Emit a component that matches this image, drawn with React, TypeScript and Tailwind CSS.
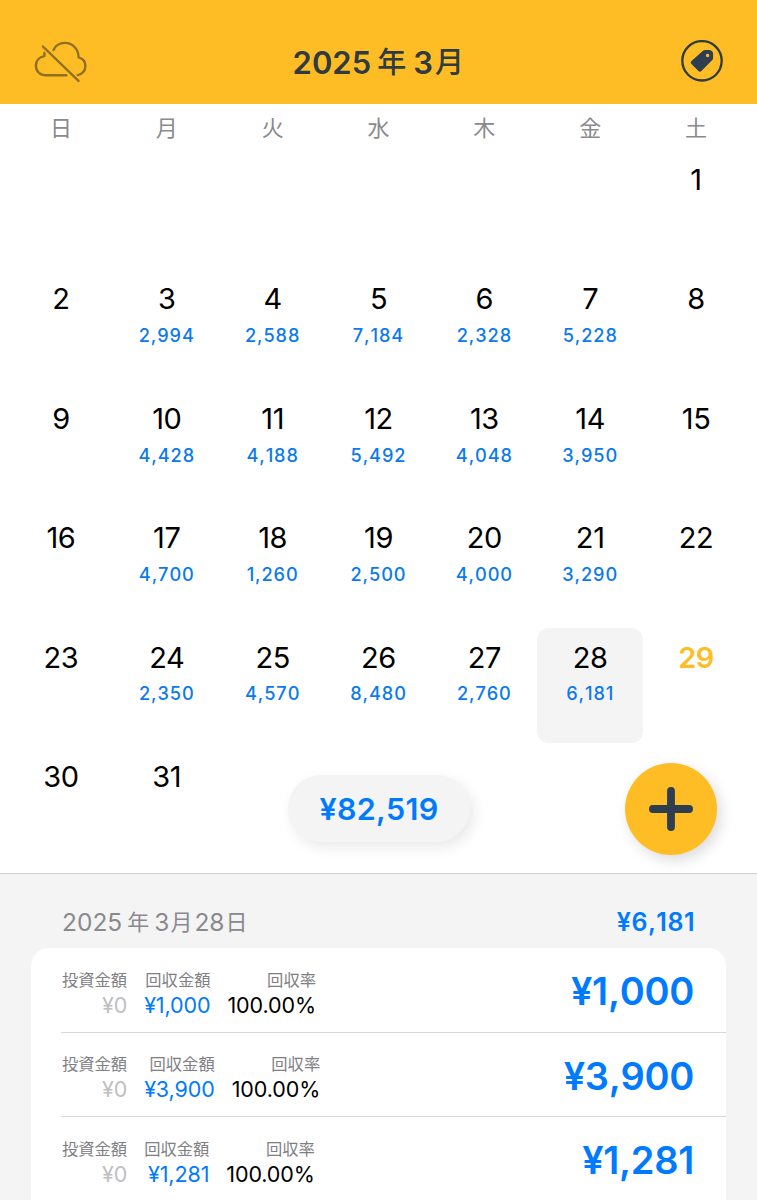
import { FC } from 'react';
import { clsx } from 'clsx';

type Day = { day: number; amount?: string };

const weekdays = ['日', '月', '火', '水', '木', '金', '土'];

const amounts: Record<number, string> = {
	3: '2,994',
	4: '2,588',
	5: '7,184',
	6: '2,328',
	7: '5,228',
	10: '4,428',
	11: '4,188',
	12: '5,492',
	13: '4,048',
	14: '3,950',
	17: '4,700',
	18: '1,260',
	19: '2,500',
	20: '4,000',
	21: '3,290',
	24: '2,350',
	25: '4,570',
	26: '8,480',
	27: '2,760',
	28: '6,181',
};

const days: Day[] = Array.from({ length: 31 }, (_, i) => ({ day: i + 1, amount: amounts[i + 1] }));

const records = ['¥1,000', '¥3,900', '¥1,281'];

const SELECTED = 28;
const TODAY = 29;

const CloudOffIcon: FC = () => (
	<svg width="54" height="44" viewBox="0.1 0.3 54 44" fill="none" stroke="#8f6f22" strokeWidth="2.4" strokeLinecap="round" strokeLinejoin="round">
		<path d="M10.5 13.3V16.4C5.5 17.2 2 21 2 26C2 31.3 6.1 35.6 11.5 35.6H32.5" />
		<path d="M19.6 10.2C21.8 5.6 26.2 3.2 31 3.2C38.6 3.2 44.6 9.3 44.7 17.7C48.7 18.8 51.5 22 51.5 26.2C51.5 31 48.2 34.8 43.8 35.4" />
		<path d="M9 6.8L44.6 41.2" />
	</svg>
);

const TagIcon: FC = () => (
	<svg width="42" height="42" viewBox="0 0.2 42 42">
		<circle cx="21" cy="21" r="19.7" fill="none" stroke="#2f3b40" strokeWidth="2.3" />
		<path
			fill="#2c3e50"
			fillRule="evenodd"
			d="M24.8 10.1H28.6C29.4 10.1 30 10.4 30.5 10.9L31.4 11.9C31.9 12.4 32.1 13 32.1 13.7V17.6C32.1 18.9 31.7 19.8 30.8 20.7L20.4 31.2C19.5 32.1 18.4 32.1 17.5 31.2L10.4 24.1C9.5 23.2 9.6 22.2 10.5 21.3L21.4 11.4C22.4 10.5 23.4 10.1 24.8 10.1ZM26.6 14A1.7 1.7 0 1 0 26.6 17.4A1.7 1.7 0 1 0 26.6 14Z"
		/>
	</svg>
);

const Header: FC = () => (
	<header className="flex h-[104px] items-start justify-between bg-[#ffbd25] pt-10 pr-[34.5px] pl-[34px]">
		<button type="button" aria-label="Sync off" className="w-[54px]">
			<CloudOffIcon />
		</button>
		<h1 className="flex h-11 items-center pt-px text-[31px] leading-none font-semibold text-[#2f3b40]">
			<span>2025</span>
			<span className="ml-[6px] text-[29px] font-medium">年</span>
			<span className="ml-[7px]">3</span>
			<span className="ml-[2px] text-[29px] font-medium">月</span>
		</h1>
		<button type="button" aria-label="Tags" className="flex w-[54px] justify-end">
			<TagIcon />
		</button>
	</header>
);

const DayCell: FC<Day> = ({ day, amount }) => (
	<div
		className={clsx(
			'mb-[4.4px] flex h-[115px] flex-col items-center rounded-xl pt-[10.3px]',
			day === 1 && 'col-start-7',
			day === SELECTED && 'bg-[#f4f4f4]',
		)}
	>
		<span className={clsx('text-[29px] leading-[37px] tracking-[-0.4px]', day === TODAY ? 'font-semibold text-[#ffbd25]' : 'text-black')}>{day}</span>
		{amount && <span className="mt-[6.7px] text-[18.2px] leading-[22px] font-medium tracking-[0.9px] text-[#0a7aee] [font-kerning:none]">{amount}</span>}
	</div>
);

const Calendar: FC = () => (
	<section className="relative h-[770px] border-b border-[#d0d0d2] bg-white px-2">
		<div className="grid h-[46.8px] grid-cols-7 text-center text-[22px] leading-[48px] text-[#8a8a8e]">
			{weekdays.map((w) => (
				<span key={w}>{w}</span>
			))}
		</div>
		<div className="grid grid-cols-7">
			{days.map((d) => (
				<DayCell key={d.day} {...d} />
			))}
		</div>
		<div className="absolute top-[671px] left-[288px] flex h-[67px] w-[182px] items-center justify-center rounded-full bg-[#f4f4f4] pt-px text-[30.5px] font-semibold tracking-[0.3px] text-[#007aff] shadow-[4px_5px_14px_rgba(0,0,0,0.09)] [font-kerning:none]">
			¥82,519
		</div>
		<button
			type="button"
			aria-label="Add record"
			className="absolute top-[659px] left-[625px] flex size-[92px] items-center justify-center rounded-full bg-[#ffbd25] shadow-[4px_5px_14px_rgba(0,0,0,0.14)]"
		>
			<svg width="44" height="44" viewBox="0 0 44 44" stroke="#2c3e50" strokeWidth="7.8" strokeLinecap="round">
				<path d="M22 3.9V40.1M3.9 22H40.1" />
			</svg>
		</button>
	</section>
);

type FieldProps = { label: string; value: string; className: string };

const Field: FC<FieldProps> = ({ label, value, className }) => (
	<div className="flex flex-col items-end">
		<span className="text-[16.3px] leading-6 text-[#808084]">{label}</span>
		<span className={clsx('text-[21.5px] leading-[26px] tracking-[-0.1px]', className)}>{value}</span>
	</div>
);

const RecordRow: FC<{ amount: string }> = ({ amount }) => (
	<li className="ml-[30px] flex h-[84.7px] justify-between border-b border-[#d8d8da] pt-[19px] pr-8 pl-px">
		<div className="flex gap-[17px] pt-[0.6px]">
			<Field label="投資金額" value="¥0" className="text-[#c0c0c2]" />
			<Field label="回収金額" value={amount} className="text-[#007aff]" />
			<Field label="回収率" value="100.00%" className="text-black" />
		</div>
		<span className="text-[38px] leading-[48px] font-semibold tracking-[-0.3px] text-[#007aff] [font-kerning:none]">{amount}</span>
	</li>
);

const DailyRecords: FC = () => (
	<section className="h-[326px] bg-[#f4f4f4] pr-[31px] pl-[31px]">
		<div className="flex h-[74px] items-center justify-between pt-[22px] pr-[31px] pl-[31px] leading-none">
			<h2 className="flex items-center text-[24.5px] text-[#8a8a8e]">
				<span>2025</span>
				<span className="ml-[5px] text-[22px]">年</span>
				<span className="ml-[5px]">3</span>
				<span className="ml-px text-[22px]">月</span>
				<span className="ml-[2px]">28</span>
				<span className="ml-px text-[22px]">日</span>
			</h2>
			<span className="text-[25px] font-semibold tracking-[0.5px] text-[#007aff] [font-kerning:none]">¥6,181</span>
		</div>
		<ul className="h-[252px] overflow-hidden rounded-t-[18px] bg-white">
			{records.map((amount) => (
				<RecordRow key={amount} amount={amount} />
			))}
		</ul>
	</section>
);

export default function App() {
	return (
		<main className="h-[1200px] w-[757px] overflow-hidden bg-white font-['Inter','Noto_Sans_CJK_JP',sans-serif]">
			<Header />
			<Calendar />
			<DailyRecords />
		</main>
	);
}
